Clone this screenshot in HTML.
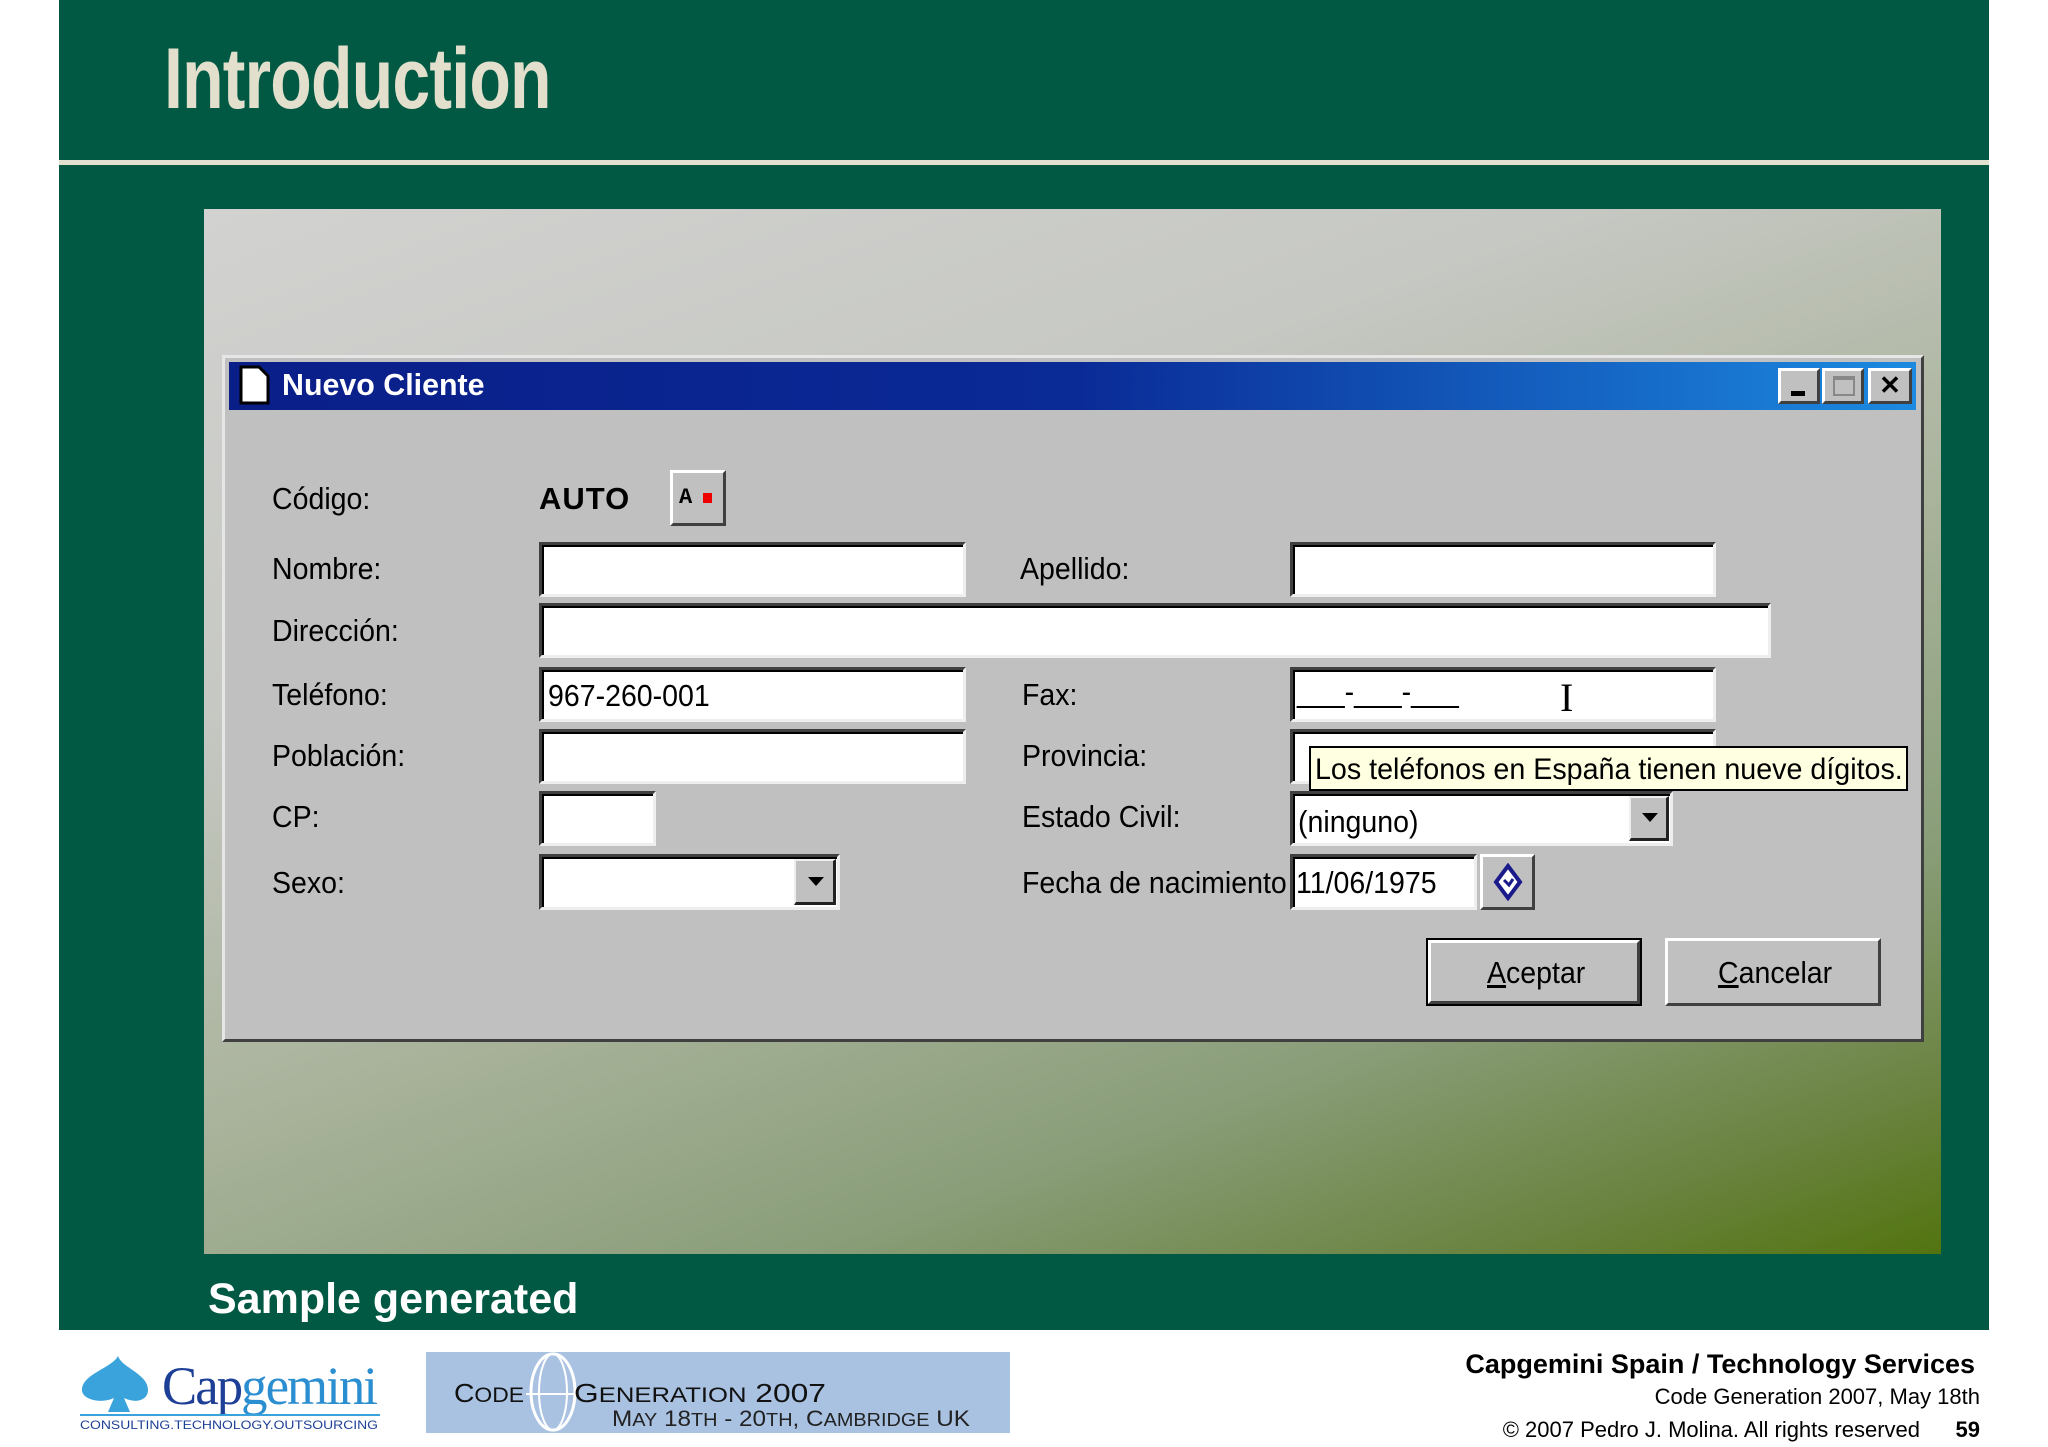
<!DOCTYPE html>
<html><head><meta charset="utf-8"><style>
*{margin:0;padding:0;box-sizing:border-box}
body{width:2048px;height:1447px;background:#fff;position:relative;overflow:hidden;font-family:"Liberation Sans",sans-serif}
.a{position:absolute}
.green{left:59px;top:0;width:1930px;height:1330px;background:#015843}
.title{left:164px;top:30px;font-weight:bold;font-size:86px;color:#e2dfcc;transform:scaleX(0.79);transform-origin:left top;letter-spacing:-1px;white-space:nowrap}
.rule{left:59px;top:160px;width:1930px;height:5px;background:#e0e2cf}
.shot{left:204px;top:209px;width:1737px;height:1045px;background:linear-gradient(160deg,#d2d2d0 0%,#c6c8c3 30%,#a9b39b 55%,#8a9e7a 75%,#6a8340 90%,#52740f 100%)}
.win{left:222px;top:355px;width:1702px;height:687px;background:#c0c0c0;border-top:3px solid #e6e6e6;border-left:3px solid #e6e6e6;border-right:3px solid #404040;border-bottom:3px solid #404040}
.tb{left:229px;top:362px;width:1687px;height:48px;background:linear-gradient(90deg,#0a1e88 0%,#0a2a96 50%,#1c8ae0 100%)}
.tt{left:282px;top:367px;color:#fff;font-weight:bold;font-size:31px;transform:scaleX(0.98);transform-origin:left top;white-space:nowrap}
.lbl,.fv{font-size:31px;color:#000;line-height:1;white-space:nowrap;transform:scaleX(0.92);transform-origin:left top}
.fld{background:#fff;border-top:3px solid #404040;border-left:3px solid #404040;border-right:3px solid #eee;border-bottom:3px solid #eee;box-shadow:inset 2px 2px 0 #000}
.btn{background:#c0c0c0;border-top:3px solid #fff;border-left:3px solid #fff;border-right:3px solid #404040;border-bottom:3px solid #404040}
.dd{background:#c0c0c0;border-top:2px solid #eee;border-left:2px solid #eee;border-right:3px solid #222;border-bottom:3px solid #222}
.tri{width:0;height:0;border-left:8px solid transparent;border-right:8px solid transparent;border-top:9px solid #000}
</style></head><body>
<div class="a green"></div>
<div class="a title">Introduction</div>
<div class="a rule"></div>
<div class="a shot"></div>
<div class="a win"></div>
<div class="a tb"></div>
<svg class="a" style="left:238px;top:364px" width="34" height="42" viewBox="0 0 34 42"><path d="M3 3h18l9 9v27H3z" fill="#fff" stroke="#000" stroke-width="3"/></svg>
<div class="a tt">Nuevo Cliente</div>
<div class="a btn" style="left:1778px;top:368px;width:42px;height:36px"><div class="a" style="left:10px;top:20px;width:14px;height:5px;background:#000"></div></div>
<div class="a btn" style="left:1822px;top:368px;width:42px;height:36px"><div class="a" style="left:8px;top:5px;width:22px;height:20px;border:2px solid #888;border-top-width:4px"></div></div>
<div class="a btn" style="left:1868px;top:368px;width:44px;height:36px;font-weight:bold;font-size:26px;text-align:center;line-height:28px">✕</div>

<div class="a lbl" style="left:272px;top:483px">Código:</div>
<div class="a" style="left:539px;top:481px;font-weight:bold;font-size:31px;letter-spacing:1px">AUTO</div>
<div class="a btn" style="left:670px;top:470px;width:56px;height:56px"><span class="a" style="left:6px;top:12px;font-weight:bold;font-size:22px;font-family:'Liberation Mono',monospace">A</span><span class="a" style="left:30px;top:20px;width:9px;height:10px;background:#e00"></span></div>

<div class="a lbl" style="left:272px;top:553px">Nombre:</div>
<div class="a fld" style="left:539px;top:542px;width:427px;height:55px"></div>
<div class="a lbl" style="left:1020px;top:553px">Apellido:</div>
<div class="a fld" style="left:1290px;top:542px;width:426px;height:55px"></div>

<div class="a lbl" style="left:272px;top:615px">Dirección:</div>
<div class="a fld" style="left:539px;top:603px;width:1232px;height:55px"></div>

<div class="a lbl" style="left:272px;top:679px">Teléfono:</div>
<div class="a fld" style="left:539px;top:667px;width:427px;height:55px"><span class="a fv" style="left:6px;top:10px">967-260-001</span></div>
<div class="a lbl" style="left:1022px;top:679px">Fax:</div>
<div class="a fld" style="left:1290px;top:667px;width:426px;height:55px"><span class="a fv" style="left:4px;top:6px">___-___-___</span><span class="a" style="left:267px;top:4px;font-size:40px;font-family:'Liberation Serif',serif">I</span></div>

<div class="a lbl" style="left:272px;top:740px">Población:</div>
<div class="a fld" style="left:539px;top:729px;width:427px;height:55px"></div>
<div class="a lbl" style="left:1022px;top:740px">Provincia:</div>
<div class="a fld" style="left:1290px;top:729px;width:426px;height:55px"></div>
<div class="a" style="left:1309px;top:746px;width:599px;height:45px;background:#ffffe1;border:2px solid #000;overflow:hidden"><span class="a fv" style="left:4px;top:7px;font-size:30px;transform:scaleX(0.955)">Los teléfonos en España tienen nueve dígitos.</span></div>

<div class="a lbl" style="left:272px;top:801px">CP:</div>
<div class="a fld" style="left:539px;top:791px;width:117px;height:55px"></div>
<div class="a lbl" style="left:1022px;top:801px">Estado Civil:</div>
<div class="a fld" style="left:1290px;top:791px;width:383px;height:55px"><span class="a fv" style="left:5px;top:12px">(ninguno)</span><div class="a dd" style="left:336px;top:2px;width:40px;height:45px"><div class="a tri" style="left:11px;top:15px"></div></div></div>

<div class="a lbl" style="left:272px;top:867px">Sexo:</div>
<div class="a fld" style="left:539px;top:854px;width:301px;height:56px"><div class="a dd" style="left:252px;top:2px;width:42px;height:46px"><div class="a tri" style="left:12px;top:16px"></div></div></div>
<div class="a lbl" style="left:1022px;top:867px">Fecha de nacimiento</div>
<div class="a fld" style="left:1290px;top:854px;width:187px;height:56px"><span class="a fv" style="left:3px;top:10px">11/06/1975</span></div>
<div class="a btn" style="left:1480px;top:854px;width:55px;height:56px"><svg class="a" style="left:10px;top:6px" width="30" height="38" viewBox="0 0 30 38"><path d="M15 3 L27 19 L15 35 L3 19Z" fill="#fff" stroke="#1a1a8a" stroke-width="4"/><path d="M11 17l5 5 4-6" stroke="#1a1a8a" stroke-width="3" fill="none"/></svg></div>

<div class="a" style="left:1426px;top:938px;width:216px;height:68px;border:2px solid #000"><div class="a btn" style="left:0;top:0;width:212px;height:64px"><span class="a fv" style="left:56px;top:14px"><u>A</u>ceptar</span></div></div>
<div class="a btn" style="left:1665px;top:938px;width:216px;height:68px"><span class="a fv" style="left:50px;top:16px"><u>C</u>ancelar</span></div>

<div class="a" style="left:208px;top:1275px;color:#fff;font-weight:bold;font-size:43px">Sample generated</div>

<svg class="a" style="left:78px;top:1352px" width="310" height="80" viewBox="0 0 310 80"><path d="M40 4 C44 16 70 22 70 38 C70 48 58 52 46 46 L52 60 L30 60 L36 46 C24 52 4 48 4 38 C4 22 34 16 40 4Z" fill="#3aa3dc"/><text x="84" y="52" font-family="Liberation Serif,serif" font-size="54" fill="#1d3f96" letter-spacing="-2" textLength="214" lengthAdjust="spacingAndGlyphs">Cap<tspan fill="#2b8ed0">gemini</tspan></text><rect x="2" y="62" width="300" height="2" fill="#3aa3dc"/><text x="2" y="77" font-family="Liberation Sans,sans-serif" font-size="12" fill="#1d3f96" textLength="298" lengthAdjust="spacingAndGlyphs">CONSULTING.TECHNOLOGY.OUTSOURCING</text></svg>
<div class="a" style="left:426px;top:1352px;width:584px;height:81px;background:#a9c2e2"></div>
<svg class="a" style="left:426px;top:1352px" width="584" height="81"><ellipse cx="127" cy="40" rx="22" ry="38" fill="none" stroke="#fff" stroke-width="3"/><ellipse cx="127" cy="40" rx="14" ry="38" fill="none" stroke="#fff" stroke-width="2"/><line x1="100" y1="42" x2="150" y2="42" stroke="#fff" stroke-width="2"/><text x="28" y="50" font-family="Liberation Sans,sans-serif" font-size="26" fill="#111" textLength="70" lengthAdjust="spacingAndGlyphs">C<tspan font-size="21">ODE</tspan></text><text x="148" y="50" font-family="Liberation Sans,sans-serif" font-size="26" fill="#111" textLength="252" lengthAdjust="spacingAndGlyphs">G<tspan font-size="21">ENERATION</tspan> 2007</text><text x="186" y="74" font-family="Liberation Sans,sans-serif" font-size="22" fill="#222" textLength="358" lengthAdjust="spacingAndGlyphs">M<tspan font-size="18">AY</tspan> 18<tspan font-size="18">TH</tspan> - 20<tspan font-size="18">TH</tspan>, C<tspan font-size="18">AMBRIDGE</tspan> UK</text></svg>

<div class="a" style="right:73px;top:1349px;font-weight:bold;font-size:27px;white-space:nowrap">Capgemini Spain / Technology Services</div>
<div class="a" style="right:68px;top:1384px;font-size:22px;white-space:nowrap">Code Generation 2007, May 18th</div>
<div class="a" style="right:128px;top:1417px;font-size:22px;white-space:nowrap">© 2007 Pedro J. Molina. All rights reserved</div>
<div class="a" style="right:68px;top:1417px;font-size:22px;font-weight:bold">59</div>
</body></html>
